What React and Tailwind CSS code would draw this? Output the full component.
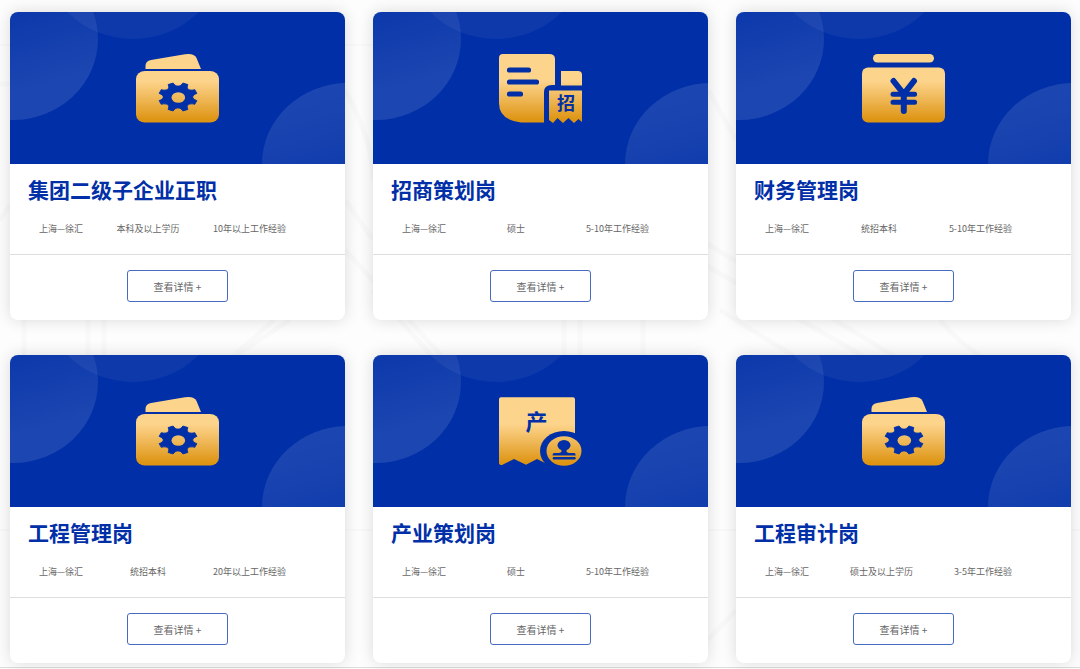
import { useId } from 'react';

const BLUE = '#002fa7';

const jobs = [
    { id: 1, title: '集团二级子企业正职', icon: 'wallet', place: '上海—徐汇', degree: '本科及以上学历', experience: '10年以上工作经验' },
    { id: 2, title: '招商策划岗', icon: 'recruit', place: '上海—徐汇', degree: '硕士', experience: '5-10年工作经验' },
    { id: 3, title: '财务管理岗', icon: 'finance', place: '上海—徐汇', degree: '统招本科', experience: '5-10年工作经验' },
    { id: 4, title: '工程管理岗', icon: 'wallet', place: '上海—徐汇', degree: '统招本科', experience: '20年以上工作经验' },
    { id: 5, title: '产业策划岗', icon: 'industry', place: '上海—徐汇', degree: '硕士', experience: '5-10年工作经验' },
    { id: 6, title: '工程审计岗', icon: 'wallet', place: '上海—徐汇', degree: '硕士及以上学历', experience: '3-5年工作经验' },
];

// Eight rounded teeth with scooped valleys between them
const gearPath = (() => {
    const point = (deg, r) => {
        const a = (deg * Math.PI) / 180;
        return `${(r * Math.cos(a)).toFixed(2)} ${(r * Math.sin(a)).toFixed(2)}`;
    };
    let d = '';
    for (let i = 0; i < 8; i++) {
        const tooth = 22.5 + i * 45;
        d += `${i === 0 ? 'M' : 'L'}${point(tooth - 8, 19.5)} L${point(tooth + 8, 19.5)} `;
        d += `C${point(tooth + 13, 13.5)} ${point(tooth + 32, 13.5)} ${point(tooth + 37, 19.5)} `;
    }
    return `${d}Z`;
})();

const WalletIcon = ({ fill }) => (
    <>
        <path fill={fill} d="M9.5 16V13Q9.5 8 15 7L49 1.3Q58 0 60.5 5L65 16Z" />
        <rect fill={fill} y="18" width="83" height="51.5" rx="9" ry="8" />
        <g transform="translate(42 44) scale(1 0.74)">
            <path d={gearPath} fill={BLUE} stroke={BLUE} strokeLinejoin="round" />
        </g>
        <ellipse fill={fill} cx="42.3" cy="44.5" rx="6.8" ry="5.2" />
    </>
);

const RecruitIcon = ({ fill }) => (
    <>
        <path fill={fill} d="M4 1H50Q56 1 56 6V32H53Q45 32 45 39V69.5H22Q0 67 0 50V5Q0 1 4 1Z" />
        <path d="M10.5 17H29.5M10.5 29H37.5M10.5 41H21.5" stroke={BLUE} strokeWidth="5.2" strokeLinecap="round" />
        <path fill={fill} d="M62 18H79Q83 18 83 22V32.5H62Z" />
        <path fill={fill} d="M50 37.5H83V69L79.5 66L75 70L69.5 65L64 70L58.5 65L54 70L50 67Z" />
        <text x="67" y="57" fontSize="18" fontWeight="700" textAnchor="middle" fill={BLUE}>招</text>
    </>
);

const FinanceIcon = ({ fill }) => (
    <>
        <rect fill={fill} x="11" y="1" width="61" height="8.6" rx="4.3" />
        <rect fill={fill} y="14.5" width="83" height="55" rx="6" />
        <g stroke={BLUE} strokeLinecap="round" strokeLinejoin="round" fill="none">
            <path d="M31.5 28L41.8 41L52 28" strokeWidth="6" />
            <path d="M31 41.3H52.6M31 49.2H52.6" strokeWidth="5" />
            <path d="M41.8 41V58" strokeWidth="6" />
        </g>
    </>
);

const IndustryIcon = ({ fill }) => (
    <>
        <path fill={fill} d="M2 1.3H74Q76 1.3 76 3.3V50L46 67L38 63L27 68.7L15 63L3 69Q0 69 0 67V3.3Q0 1.3 2 1.3Z" />
        <text x="37.5" y="34" fontSize="22" fontWeight="700" textAnchor="middle" fill={BLUE}>产</text>
        <ellipse cx="65" cy="55" rx="24" ry="20" fill={BLUE} />
        <ellipse cx="65" cy="55" rx="17.5" ry="14.8" fill={fill} />
        <g fill={BLUE}>
            <ellipse cx="65" cy="49.3" rx="6.5" ry="5.2" />
            <path d="M62.5 52H67.5V55.5Q68 56.8 70 57H75Q76.7 57 76.7 59.4H53.5Q53.5 57 55.5 57H60Q62 56.8 62.5 55.5Z" />
            <rect x="53.7" y="61" width="23" height="2.5" rx="1" />
        </g>
    </>
);

const icons = {
    wallet: WalletIcon,
    recruit: RecruitIcon,
    finance: FinanceIcon,
    industry: IndustryIcon,
};

const JobIcon = ({ name }) => {
    const id = useId();
    const Icon = icons[name];
    return (
        <svg viewBox="0 0 84 70" className="relative h-[70px] w-[84px]" aria-hidden="true">
            <defs>
                <linearGradient id={id} gradientUnits="userSpaceOnUse" x1="0" y1="0" x2="0" y2="70">
                    <stop offset="0.4" stopColor="#fdd48c" />
                    <stop offset="0.65" stopColor="#efb858" />
                    <stop offset="0.95" stopColor="#de9514" />
                </linearGradient>
            </defs>
            <Icon fill={`url(#${id})`} />
        </svg>
    );
};

// Translucent discs behind the icon
const BannerPattern = () => {
    const id = useId();
    return (
        <svg viewBox="0 0 335 152" preserveAspectRatio="none" className="absolute inset-0 h-full w-full" aria-hidden="true">
            <defs>
                <linearGradient id={id} x1="0.35" y1="0" x2="0.65" y2="1">
                    <stop offset="0" stopColor="#fff" stopOpacity="0.11" />
                    <stop offset="0.2" stopColor="#fff" stopOpacity="0.1" />
                    <stop offset="0.65" stopColor="#fff" stopOpacity="0.05" />
                </linearGradient>
                <linearGradient id={`${id}-up`} x1="0.35" y1="0" x2="0.65" y2="1">
                    <stop offset="0.3" stopColor="#fff" stopOpacity="0.04" />
                    <stop offset="0.8" stopColor="#fff" stopOpacity="0.11" />
                </linearGradient>
            </defs>
            <ellipse cx="3" cy="27" rx="85" ry="81" fill={`url(#${id}-up)`} />
            <ellipse cx="123" cy="-58" rx="90" ry="85" fill="#fff" fillOpacity="0.05" />
            <ellipse cx="338" cy="152" rx="86" ry="81" fill={`url(#${id})`} />
        </svg>
    );
};

// Faint line work on the page background
const Backdrop = () => (
    <svg viewBox="0 0 1080 669" preserveAspectRatio="none" className="absolute inset-0 h-full w-full" fill="none" stroke="#f9f9f9" strokeWidth="5" aria-hidden="true">
        <path d="M24 320V360M88 320V360M104 320V360M564 320V360M580 320V360M643 320V360" />
        <path d="M290 320L225 362M274 320L220 368M345 200L373 240M345 250L450 365M373 290L440 365" />
        <path d="M700 240Q820 310 900 360M700 262Q800 320 870 360M720 310L800 360M940 320Q960 345 990 362" />
        <path d="M0 45H10M345 45H373M0 530H10M345 530H373M708 530H736M1070 530H1080" strokeWidth="2" />
        <path d="M0 84H10M0 220L10 205M345 90Q373 140 373 180M708 90L736 140M708 640L736 610" />
    </svg>
);

const JobCard = ({ job }) => (
    <article className="overflow-hidden rounded-lg bg-white shadow-[0_0_16px_rgba(0,0,0,0.14)]">
        <div className="relative flex h-[152px] items-center justify-center overflow-hidden bg-[#002fa7]">
            <BannerPattern />
            <JobIcon name={job.icon} />
        </div>
        <div className="pt-[11px] pb-[17px]">
            <h2 className="pl-[18px] text-[21px] leading-7 font-bold text-[#002fa7]">{job.title}</h2>
            <ul className="mt-[18px] flex justify-between pr-[59px] pl-[29px] text-[9px] leading-4 text-[#666]">
                <li>{job.place}</li>
                <li>{job.degree}</li>
                <li>{job.experience}</li>
            </ul>
        </div>
        <div className="flex justify-center border-t border-[#dedede] pt-[15px] pb-[18px]">
            <a href="#" className="flex h-8 w-[101px] items-center justify-center rounded-[3px] border border-[#466bc1] pt-0.5 text-[10px] leading-4 text-[#666]">
                查看详情 +
            </a>
        </div>
    </article>
);

export default function App() {
    return (
        <div className="relative min-h-screen bg-[#fdfdfd] font-['Noto_Sans_CJK_SC',sans-serif]">
            <Backdrop />
            <main className="relative grid grid-cols-3 gap-x-7 gap-y-[35px] border-b border-[#dcdcdc] pt-3 pr-[9px] pb-1 pl-[10px]">
                {jobs.map(job => (
                    <JobCard key={job.id} job={job} />
                ))}
            </main>
        </div>
    );
}
